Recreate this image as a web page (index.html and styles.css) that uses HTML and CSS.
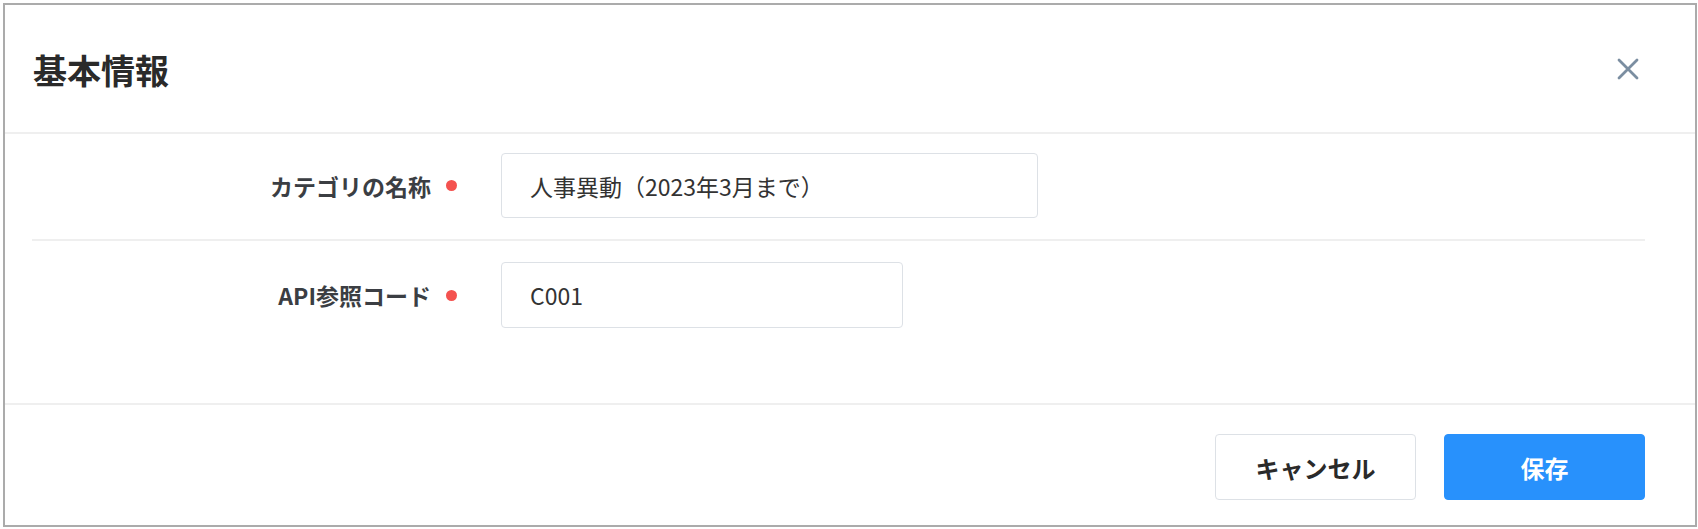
FILE: index.html
```html
<!DOCTYPE html>
<html lang="ja">
<head>
<meta charset="utf-8">
<link rel="stylesheet" href="styles.css">
</head>
<body>
<div class="frame">
  <div class="header">
    <h1 class="title">基本情報</h1>
    <button class="close" aria-label="閉じる">
      <svg width="22" height="22" viewBox="0 0 22 22"><path d="M2 2 L20 20 M20 2 L2 20" stroke="#7b8ea1" stroke-width="2.8" stroke-linecap="round" fill="none"/></svg>
    </button>
  </div>
  <div class="body">
    <div class="row">
      <div class="label-col"><span class="label">カテゴリの名称</span><span class="dot"></span></div>
      <div class="field field-wide">人事異動（2023年3月まで）</div>
    </div>
    <div class="row">
      <div class="label-col"><span class="label">API参照コード</span><span class="dot"></span></div>
      <div class="field field-narrow">C001</div>
    </div>
  </div>
  <div class="footer">
    <button class="btn btn-cancel">キャンセル</button>
    <button class="btn btn-save">保存</button>
  </div>
</div>
</body>
</html>
```

FILE: styles.css
```css
* { box-sizing: border-box; }
html, body { margin: 0; padding: 0; background: #ffffff; }
body {
  font-family: "Noto Sans CJK JP", "Noto Sans", sans-serif;
  color: #333333;
}
.frame {
  margin: 3px 0 0 3px;
  width: 1694px;
  height: 524px;
  border: 2px solid #ababab;
  display: flex;
  flex-direction: column;
}
.header {
  height: 129px;
  flex: none;
  display: flex;
  align-items: center;
  justify-content: space-between;
  padding: 0 56px 0 28px;
  border-bottom: 2px solid #efefef;
}
.title {
  margin: 0;
  font-size: 34px;
  font-weight: 700;
  color: #2a2a2a;
  line-height: 1;
  padding-top: 2px;
}
.close {
  border: 0;
  background: none;
  padding: 0;
  width: 22px;
  height: 22px;
  display: flex;
}
.body {
  height: 269px;
  flex: none;
  padding: 0 50px 0 27px;
}
.row {
  display: flex;
  align-items: center;
  padding: 19px 0 21px;
}
.row + .row {
  border-top: 2px solid #efefef;
  padding-top: 21px;
}
.label-col {
  width: 469px;
  display: flex;
  align-items: center;
  justify-content: flex-end;
  padding-right: 44px;
  gap: 15px;
}
.label {
  font-size: 23px;
  font-weight: 700;
  color: #3b3e43;
}
.dot {
  width: 11px;
  height: 11px;
  border-radius: 50%;
  background: #f4524f;
}
.field {
  height: 65px;
  border: 1px solid #dde1e6;
  border-radius: 4px;
  display: flex;
  align-items: center;
  padding-left: 28px;
  font-size: 23px;
  color: #333;
}
.field-wide { width: 537px; }
.field-narrow { width: 402px; height: 66px; }
.footer {
  flex: 1;
  border-top: 2px solid #efefef;
  display: flex;
  justify-content: flex-end;
  align-items: flex-start;
  gap: 28px;
  padding: 29px 50px 0 0;
}
.btn {
  width: 201px;
  height: 66px;
  border-radius: 4px;
  font-family: "Noto Sans CJK JP", "Noto Sans", sans-serif;
  font-size: 24px;
  font-weight: 700;
}
.btn-cancel {
  background: #ffffff;
  border: 1px solid #dde1e6;
  color: #2a2a2a;
}
.btn-save {
  background: #2891fc;
  border: 1px solid #2891fc;
  color: #ffffff;
}
```
